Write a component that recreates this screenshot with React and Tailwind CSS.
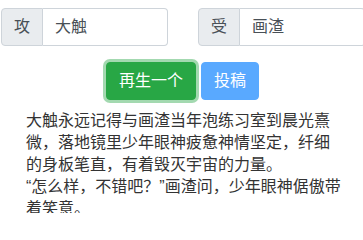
import React from "react";

const font = { fontFamily: '"Liberation Sans", "Noto Sans CJK SC", sans-serif' };

function Group({ label, value, className }) {
  return (
    <div className={`flex h-[38px] w-[167px] shrink-0 ${className}`}>
      <div className="flex items-center rounded-l-[4px] border border-[#ced4da] bg-[#e9ecef] px-[12px] text-[16px] leading-[24px] text-[#495057]">
        {label}
      </div>
      <div className="flex flex-1 items-center rounded-r-[4px] border border-l-0 border-[#ced4da] bg-white px-[12px] text-[16px] leading-[24px] text-[#495057]">
        {value}
      </div>
    </div>
  );
}

export default function App() {
  return (
    <div className="h-[213px] w-[363px] overflow-hidden bg-white" style={font}>
      <div className="flex pt-[8px]">
        <Group label="攻" value="大触" className="ml-[1px]" />
        <Group label="受" value="画渣" className="ml-[30px]" />
      </div>
      <div className="mt-[16px] flex justify-center gap-[5px] pl-[2px]">
        <button className="h-[38px] rounded-[4px] border border-[#28a745] bg-[#28a745] px-[12px] text-[16px] leading-[24px] text-white shadow-[0_0_0_3px_rgba(72,180,97,0.5)]">
          再生一个
        </button>
        <button className="h-[38px] rounded-[4px] border border-[#59a9ff] bg-[#59a9ff] px-[12px] text-[16px] leading-[24px] text-white">
          投稿
        </button>
      </div>
      <div className="mt-[10px] ml-[26px] w-[316px] text-[16px] leading-[22px] text-[#333]">
        <p>大触永远记得与画渣当年泡练习室到晨光熹微，落地镜里少年眼神疲惫神情坚定，纤细的身板笔直，有着毁灭宇宙的力量。</p>
        <p>“怎么样，不错吧？”画渣问，少年眼神倨傲带着笑意。</p>
      </div>
    </div>
  );
}
